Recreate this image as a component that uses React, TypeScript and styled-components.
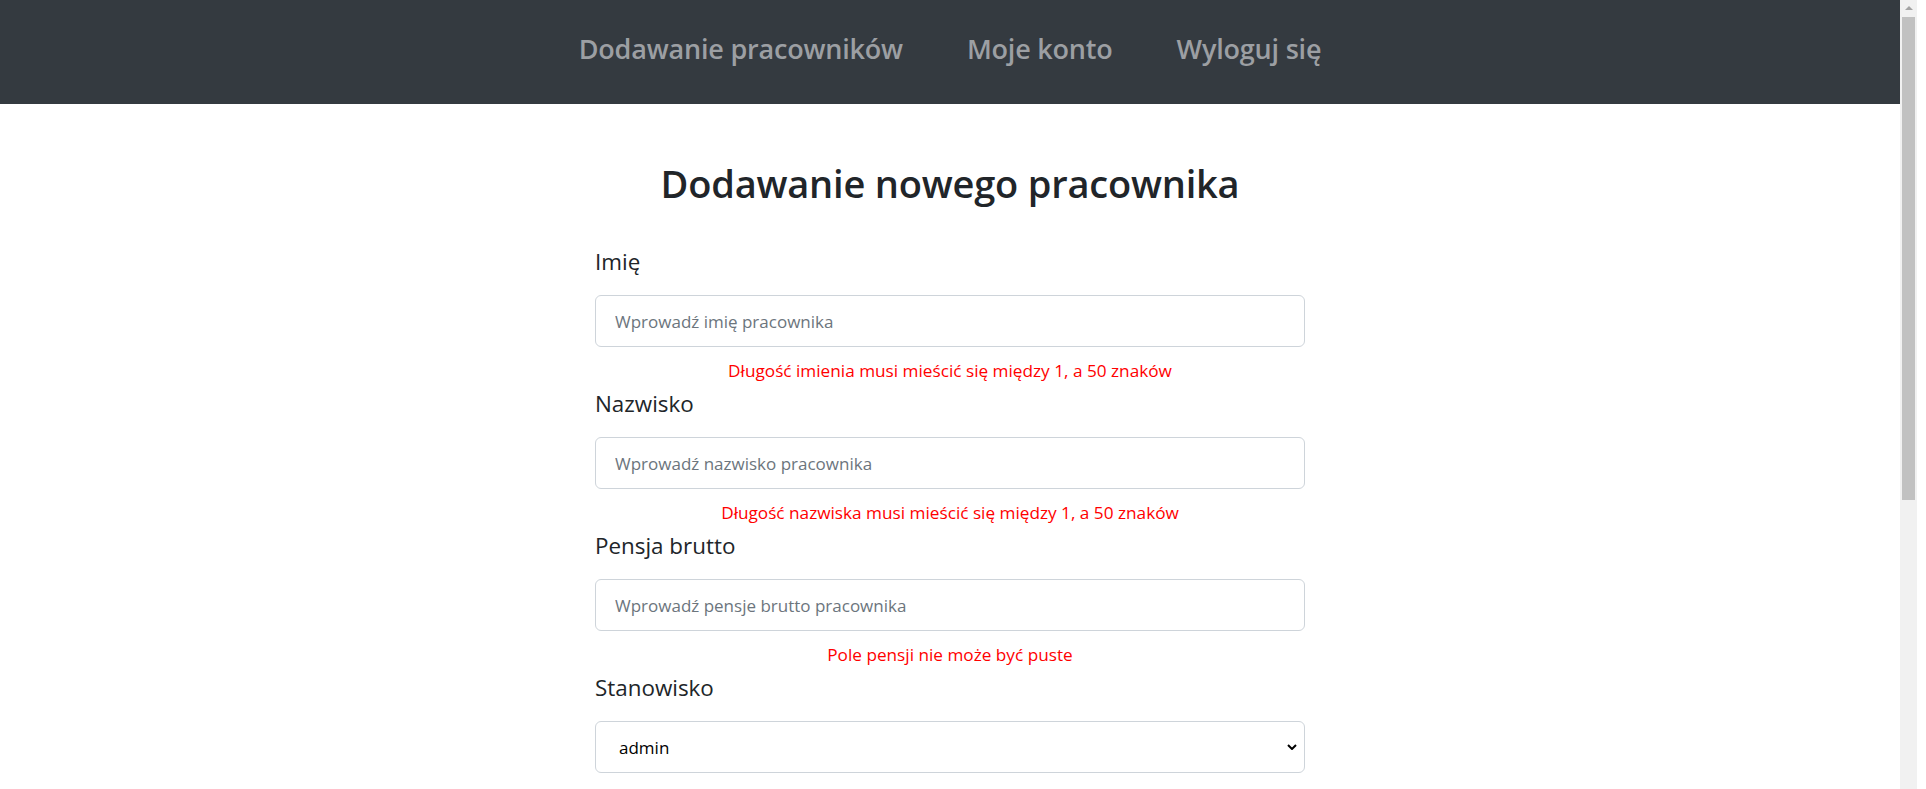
import React from "react";
import styled, { createGlobalStyle } from "styled-components";

const GlobalStyle = createGlobalStyle`
  html, body {
    margin: 0;
    padding: 0;
    background: #ffffff;
    overflow: hidden;
  }
  body {
    font-family: "Open Sans", "Noto Sans", sans-serif;
    color: #212529;
  }
  * { box-sizing: border-box; }
`;

const Shell = styled.div`
  display: flex;
  width: 1926px;
  height: 789px;
  overflow: hidden;
  background: #ffffff;
`;

const Page = styled.div`
  width: 1900px;
  display: flex;
  flex-direction: column;
`;

const Scrollbar = styled.div`
  width: 17px;
  height: 789px;
  background: #f1f1f1;
  display: flex;
  flex-direction: column;
  align-items: center;
  padding-top: 6px;
  gap: 7px;
`;

const Arrow = styled.div`
  width: 0;
  height: 0;
  border-left: 4px solid transparent;
  border-right: 4px solid transparent;
  border-bottom: 4px solid #a3a3a3;
`;

const Thumb = styled.div`
  width: 13px;
  height: 483px;
  background: #c1c1c1;
`;

const NavBar = styled.nav`
  height: 104px;
  background: #343a40;
  display: flex;
  align-items: center;
  justify-content: center;
  gap: 64px;
  padding-bottom: 8px;
`;

const NavLink = styled.a`
  font-family: "Open Sans", sans-serif;
  font-size: 27px;
  font-weight: 600;
  color: #9c9fa3;
  text-decoration: none;
  letter-spacing: -0.2px;
`;

const Main = styled.main`
  width: 710px;
  margin: 0 auto;
  padding-top: 57px;
  display: flex;
  flex-direction: column;
`;

const Title = styled.h1`
  margin: 0 0 38px;
  font-size: 38px;
  font-weight: 600;
  line-height: 45px;
  text-align: center;
  color: #212529;
  letter-spacing: -0.2px;
`;

const Group = styled.div`
  display: flex;
  flex-direction: column;
`;

const Label = styled.label`
  font-size: 22.4px;
  line-height: 36px;
  color: #212529;
  margin-bottom: 15px;
`;

const Input = styled.input`
  height: 52px;
  width: 100%;
  border: 1px solid #ced4da;
  border-radius: 6px;
  padding: 0 19px;
  font-family: "Open Sans", sans-serif;
  font-size: 17px;
  color: #212529;
  background: #fff;
  outline: none;
  &::placeholder {
    color: #6c757d;
  }
`;

const SelectWrap = styled.div`
  position: relative;
  width: 100%;
`;

const Select = styled.select`
  appearance: none;
  -webkit-appearance: none;
  height: 52px;
  width: 100%;
  border: 1px solid #ced4da;
  border-radius: 6px;
  padding: 0 40px 0 23px;
  font-family: "Open Sans", sans-serif;
  font-size: 17px;
  color: #000;
  background: #fff;
  outline: none;
`;

const Chevron = styled.svg`
  position: absolute;
  right: 8px;
  top: 23px;
  width: 10px;
  height: 6px;
  pointer-events: none;
`;

const ErrorText = styled.div`
  margin-top: 10px;
  margin-bottom: 2px;
  font-size: 17.2px;
  line-height: 27px;
  color: #ff0000;
  text-align: center;
`;

type FieldProps = { label: string; placeholder: string; error: string };

const Field = ({ label, placeholder, error }: FieldProps) => (
  <Group>
    <Label>{label}</Label>
    <Input placeholder={placeholder} />
    <ErrorText>{error}</ErrorText>
  </Group>
);

export default function App() {
  return (
    <>
      <GlobalStyle />
      <Shell>
        <Page>
          <NavBar>
            <NavLink href="#">Dodawanie pracowników</NavLink>
            <NavLink href="#">Moje konto</NavLink>
            <NavLink href="#">Wyloguj się</NavLink>
          </NavBar>
          <Main>
            <Title>Dodawanie nowego pracownika</Title>
            <Field
              label="Imię"
              placeholder="Wprowadź imię pracownika"
              error="Długość imienia musi mieścić się między 1, a 50 znaków"
            />
            <Field
              label="Nazwisko"
              placeholder="Wprowadź nazwisko pracownika"
              error="Długość nazwiska musi mieścić się między 1, a 50 znaków"
            />
            <Field
              label="Pensja brutto"
              placeholder="Wprowadź pensje brutto pracownika"
              error="Pole pensji nie może być puste"
            />
            <Group>
              <Label>Stanowisko</Label>
              <SelectWrap>
                <Select defaultValue="admin">
                  <option value="admin">admin</option>
                  <option value="pracownik">pracownik</option>
                </Select>
                <Chevron viewBox="0 0 10 6">
                  <path d="M1 1 L5 5 L9 1" fill="none" stroke="#000" strokeWidth="2" />
                </Chevron>
              </SelectWrap>
            </Group>
          </Main>
        </Page>
        <Scrollbar>
          <Arrow />
          <Thumb />
        </Scrollbar>
      </Shell>
    </>
  );
}
